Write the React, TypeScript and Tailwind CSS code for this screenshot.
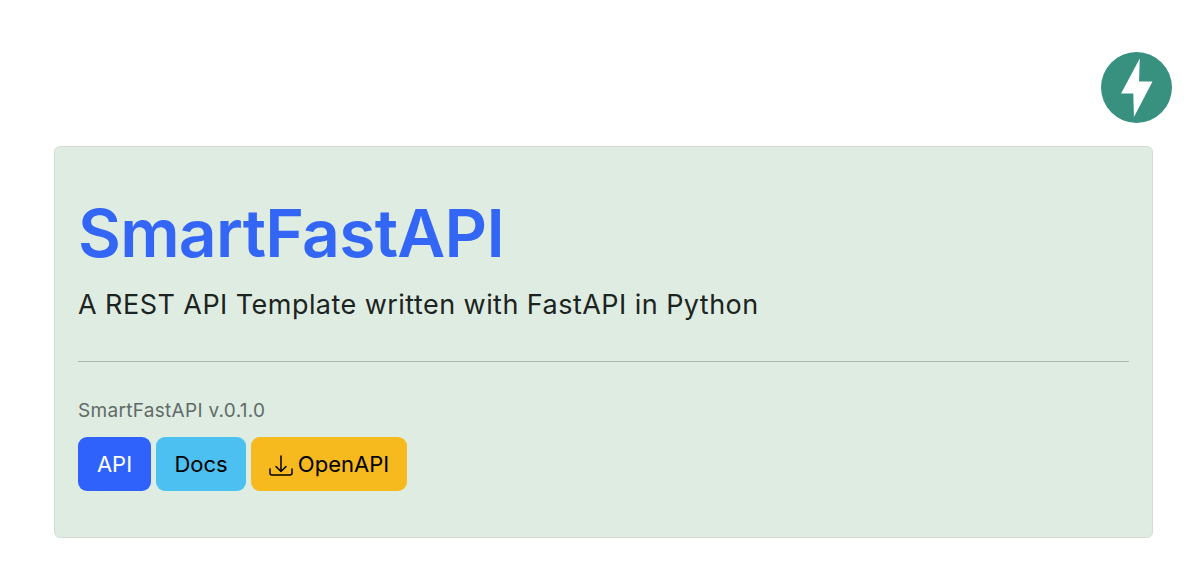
import React from 'react';

function FastApiLogo() {
  return (
    <svg viewBox="0 0 70 70" className="block h-[71px] w-[71px]">
      <circle cx="35" cy="35" r="35" fill="#38917f" />
      <path d="M38.2 6.5 L19.8 40.8 L31.8 40.8 L32.5 64.2 L50.8 29.2 L37.5 29.2 Z" fill="#ffffff" />
    </svg>
  );
}

function DownloadIcon() {
  return (
    <svg viewBox="0 0 24 24" fill="none" stroke="currentColor" strokeWidth="1.5" className="h-[24px] w-[24px]">
      <path d="M12 4v15.5M7 14.5l5 5 5-5" strokeLinecap="round" strokeLinejoin="round" />
      <path d="M1 17v4a2 2 0 0 0 2 2h18a2 2 0 0 0 2-2v-4" strokeLinecap="round" />
    </svg>
  );
}

export default function App() {
  return (
    <div className="h-[585px] w-[1200px] overflow-hidden bg-white font-['Inter',sans-serif]">
      {/* Logo */}
      <div className="flex justify-end pr-[28px] pt-[52px]">
        <FastApiLogo />
      </div>

      {/* Jumbotron */}
      <div className="ml-[54px] mt-[23px] h-[392px] w-[1099px] rounded-[6px] border border-[#d3dcd5] bg-[#dfece2] px-[23px] pt-[46px]">
        <h1 className="text-[66px] leading-[80px] font-semibold tracking-[-0.75px] text-[#3366f5]">SmartFastAPI</h1>
        <p className="mt-[13px] text-[27px] leading-[38px] tracking-[0.45px] text-[#1c2422]">A REST API Template written with FastAPI in Python</p>
        <hr className="mt-[37px] border-0 border-t border-[#a9b8b0]" />
        <p className="mt-[36px] text-[19px] leading-[26px] tracking-[0.3px] text-[#5f6b68]">SmartFastAPI v.0.1.0</p>

        <div className="mt-[13px] flex gap-[5px]">
          <button className="h-[54px] w-[73px] rounded-[9px] bg-[#2f62fb] text-[22px] text-white">API</button>
          <button className="h-[54px] w-[90px] rounded-[9px] bg-[#4cc0f0] text-[22px] text-black">Docs</button>
          <button className="flex h-[54px] w-[156px] items-center justify-center gap-[5px] rounded-[9px] bg-[#f6b91e] text-[22px] text-black">
            <DownloadIcon />
            OpenAPI
          </button>
        </div>
      </div>
    </div>
  );
}
